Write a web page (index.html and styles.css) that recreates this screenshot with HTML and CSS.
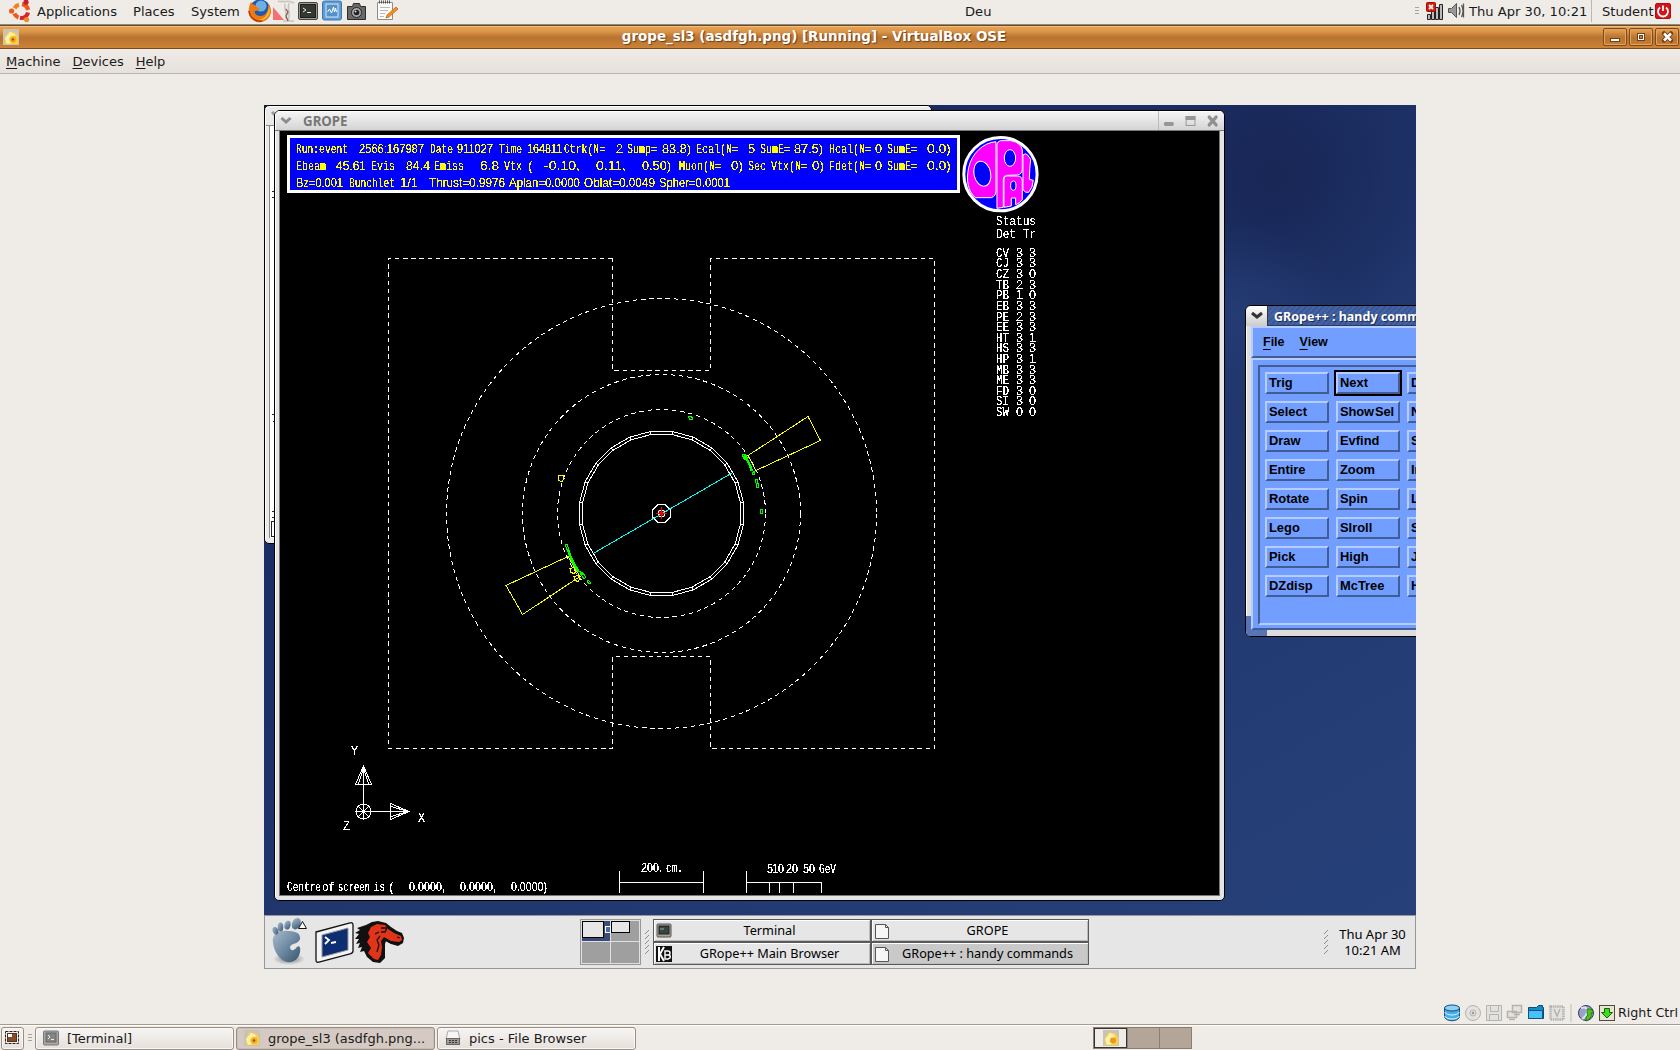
FILE: index.html
```html
<!DOCTYPE html>
<html lang="en">
<head>
<meta charset="utf-8">
<title>grope_sl3 (asdfgh.png) [Running] - VirtualBox OSE</title>
<link rel="stylesheet" href="styles.css">
</head>
<body>
<header class="panel">
  <svg class="ubuntu" viewBox="0 0 24 24"><g fill="none" stroke-width="4.2"><path d="M6.6 9.2A7 7 0 0 1 11 5.8" stroke="#f0831e"/><path d="M14 5.2A7.2 7.2 0 0 1 20 11" stroke="#ee5a1c"/><path d="M20 13.5A7.2 7.2 0 0 1 12 18.9" stroke="#d9252a"/><path d="M10.5 18.5A7 7 0 0 1 6.4 14.5" stroke="#ee5a1c"/></g><circle cx="3.6" cy="12" r="2.6" fill="#ee5a1c"/><circle cx="18" cy="3.2" r="2.6" fill="#c8202a"/><circle cx="18.6" cy="20.6" r="2.6" fill="#f08a26"/></svg>
  <span class="m-app">Applications</span><span class="m-places">Places</span><span class="m-system">System</span>
  <svg class="launch" viewBox="0 0 152 24">
    <circle cx="12" cy="11" r="10.500" fill="#2458a8"/><circle cx="13" cy="7" r="5.500" fill="#6cb0e8"/><path d="M3 3C0 9-1 17 5 21c7 5 17 1 18-8 0-4-1-6-3-8 1 5-1 12-8 12-4 0-6-3-5-5 2 0 4-1 5-3-2 0-4-1-5-3-1 0-3-1-4-3z" fill="#ee7a14"/><path d="M21 8c3 8-4 15-12 13 7 0 11-5 12-13z" fill="#f9c22b"/><path d="M1 12c1 8 8 11 13 10" fill="none" stroke="#b8340c" stroke-width="1.500"/>
    <path d="M25 8l11 13H25z" fill="#f77070"/><path d="M30 2c3 2 5-1 7 1 3-2 6 0 9 1M37 5c-1 5 2 8 1 15M41 4c-2 5 2 11-1 18M35 22h11" fill="none" stroke="#c9c4bd" stroke-width="1.600"/><path d="M38 10l2 3-2 4 2 5" fill="none" stroke="#8a5d50" stroke-width="1.300"/>
    <rect x="50.500" y="3.500" width="19" height="17" rx="1.500" fill="#999a94" stroke="#444"/><rect x="52.500" y="5.500" width="15" height="13" fill="#34382f" stroke="#1d1f1b"/><path d="M55 9l3 2-3 2M59 13.500h4" fill="none" stroke="#eee"/>
    <rect x="74.500" y="2" width="19" height="19" rx="2" fill="#5d9bd3" stroke="#3d78b4"/><rect x="78" y="5" width="12" height="13" fill="#5592ca" stroke="#d7e9f8"/><path d="M79.500 13l2-3 2 4 2-6 1 5 1-4 1 4" fill="none" stroke="#fff"/>
    <path d="M99.500 7.500h5l1-3h6l1 3h5v13h-18z" fill="#686a67" stroke="#2c2d2b"/><circle cx="108.500" cy="13.500" r="5" fill="#aaa" stroke="#222"/><circle cx="108.500" cy="13.500" r="2.800" fill="#222"/><circle cx="107.500" cy="12.500" r="1" fill="#ddd"/>
    <path d="M129.500 3.500h15v17h-15z" fill="#fafafa" stroke="#8d8d8a"/><path d="M131 3h12" stroke="#555" stroke-width="3" stroke-dasharray="1 1"/><path d="M132 8.500h10M132 11.500h8M132 14.500h5M132 17.500h4" stroke="#bbb"/><path d="M139 16l9-8 2 2-9 8-3 1z" fill="#f6931d" stroke="#b85a0c" stroke-width=".7"/>
  </svg>
  <span class="keyboard">Deu</span>
  <i class="grip"></i>
  <svg class="tray" viewBox="0 0 40 20"><g stroke="#222" fill="#bbb"><path d="M1.500 13.500h3v5h-3zM5.500 10.500h3v8h-3zM9.500 6.500h3v12h-3zM13.500 3.500h3v15h-3z"/></g><rect x=".5" y="1.500" width="9" height="9" rx="1" fill="#d91a10" stroke="#a80d05"/><path d="M3 4l4 4M7 4L3 8" stroke="#fff" stroke-width="1.800"/><path d="M22.500 7.500h3l5-5v14l-5-5h-3z" fill="#999" stroke="#555"/><path d="M33 6q2 4 0 8M35.500 4q3 6 0 12M37.500 2.500v14" fill="none" stroke="#555" stroke-width="1.300"/></svg>
  <span class="clock">Thu Apr 30, 10:21</span><i class="divider"></i><span class="user">Student</span>
  <svg class="power" viewBox="0 0 16 16"><rect x=".5" y=".5" width="15" height="15" rx="1.500" fill="#d8141b" stroke="#b30d12"/><path d="M5 4.500a5 5 0 1 0 6 0M8 2.500v5.500" fill="none" stroke="#fff" stroke-width="1.800"/></svg>
</header>

<div class="titlebar">
  <svg class="app-icon" viewBox="0 0 16 16"><rect width="16" height="16" fill="#c9c3b6"/><path d="M2 15V8l4-6 7 2 2 4v7z" fill="#f9d04c"/><path d="M2 9l5-6 5 2-3 9-5 1z" fill="#fff0a8"/><circle cx="10" cy="10.500" r="3.500" fill="#f5b21c"/><circle cx="10" cy="10.500" r="1.300" fill="#a64b10"/></svg>
  <span class="title">grope_sl3 (asdfgh.png) [Running] - VirtualBox OSE</span>
  <div class="winbtns"><b><svg viewBox="0 0 22 16"><rect x="6.500" y="9.500" width="9" height="3" fill="#fff" stroke="#714018"/></svg></b><b><svg viewBox="0 0 22 16"><rect x="7.500" y="4.500" width="7" height="7" fill="#fff" stroke="#714018"/><rect x="9.500" y="6.500" width="3" height="3" fill="#c98038" stroke="#714018"/></svg></b><b><svg viewBox="0 0 22 16"><path d="M8 4.500l7 7M15 4.500l-7 7" stroke="#714018" stroke-width="4.500" stroke-linecap="round"/><path d="M8 4.500l7 7M15 4.500l-7 7" stroke="#fff" stroke-width="2.500"/></svg></b></div>
</div>

<nav class="menubar"><span><u>M</u>achine</span><span><u>D</u>evices</span><span><u>H</u>elp</span></nav>

<main class="view">
  <div class="guest">
    <section class="back-window"><div class="back-title"><svg viewBox="0 0 10 8"><path d="M1 1l4 4 4-4" fill="none" stroke="#999" stroke-width="3"/></svg></div><div class="back-body"></div>
      <svg class="back-text" viewBox="0 0 10 370" shape-rendering="crispEdges"><path d="M2 16h4M4 16v6M2 22h4M2 239h4M3 246h4v-3M4 269h2M4 278h2M2 336h4M4 336v6M2 342h4M1.500 346.500h8v15h-8z" fill="none" stroke="#222"/></svg>
    </section>

    <section class="grope">
      <div class="gtitle"><svg class="chev" viewBox="0 0 12 9"><path d="M1.500 2L6 6l4.500-4" fill="none" stroke="#8c8c8c" stroke-width="3"/></svg><span>GROPE</span><svg class="gbtns" viewBox="0 0 66 20"><rect x="5" y="11" width="10" height="4" rx="1.500" fill="#969696"/><rect x="27.500" y="5.500" width="9" height="9" fill="none" stroke="#969696"/><rect x="27" y="5" width="10" height="4" fill="#969696"/><path d="M51 6l7 8M58 6l-7 8" stroke="#909090" stroke-width="3.300" stroke-linecap="round"/></svg></div>
      <svg class="canvas" viewBox="280 131 939 764">
        <defs><filter id="bitmap" x="0" y="0" width="1" height="1" color-interpolation-filters="sRGB"><feComponentTransfer><feFuncA type="discrete" tableValues="0 0 1 1 1"/></feComponentTransfer></filter></defs>
        <rect x="280" y="131" width="939" height="764" fill="#000"/>
        <rect x="288.500" y="136.500" width="670" height="55" fill="#00f" stroke="#fff" stroke-width="3"/>
        <g class="stroke-text yellow" id="banner"></g>
        <g class="stroke-text white" id="labels"></g>
        <g transform="translate(640 95) scale(.3333)" stroke="#fff" stroke-width="3" fill="#f0f" stroke-linejoin="round">
          <circle cx="1081.500" cy="237.500" r="110" fill="#00f" stroke-width="9"/>
          <path d="M1068 140c-38 3-72 34-82 78-8 40-2 70 20 90h48q14-4 14-22z"/><path d="M1071 340V148q2-9 10-11h32q30 6 34 28v57q0 15-14 18l-33 1q-10 1-10 12v84z"/><path d="M1092 337v-85q0-9 9-9h31q15 0 15 15v55q-6 12-20 16v-20h-13v24z"/><path d="M1149 180q8-7 14 0l9 13q-3 25-4 60l12 3q-1 22-14 36-10 3-17-8z"/>
          <ellipse cx="1027" cy="236" rx="25" ry="38" fill="#00f" transform="rotate(-12 1027 236)"/><ellipse cx="1110" cy="189" rx="17" ry="25" fill="#00f"/><ellipse cx="1120" cy="272" rx="8" ry="14" fill="#00f"/>
        </g>
        <g class="lines" fill="none" stroke="#fff" shape-rendering="crispEdges">
          <g stroke-dasharray="4.500 3.700"><path d="M612.500 258.500H388.500V748.500H612.500V656.500H710.500V748.500H934.500V258.500H710.500V370.500H612.500z"/><circle cx="661.500" cy="513.500" r="215"/><circle cx="661.500" cy="513.500" r="139"/><circle cx="661.500" cy="513.500" r="104"/></g>
          <g id="barrel"></g>
          <path d="M658 504.500h7l5.500 5.500v7l-5.500 5.500h-7l-5.500-5.500v-7z"/><path d="M660 510.500h3l1.500 1.500v3l-1.500 1.500h-3l-1.500-1.500v-3z"/>
          <path d="M363.500 765v54M355.500 811.500H410M363.500 766l8 18.500h-16zM363.500 768l5 16M363.500 768l-5 16M409 811.500l-18.500-8v16zM408 811.500l-17-5M408 811.500l-17 5M358 806l11 11M369 806l-11 11"/><circle cx="363.500" cy="811.500" r="7.500"/>
          <path d="M619.500 871v22M703.500 871v22M619.500 882.500h84M746.500 871v22M746.500 882.500h75v10.500M769.500 882.500v10.500M779.500 882.500v10.500M793.500 882.500v10.500"/>
          <path d="M594 553L732 473" stroke="#0ff"/>
          <path d="M748 455.500l60-39 12.500 24-64.500 30zM568 556.500L506 585.500l16.500 29L580 576.500zM559 475.500h4l1 3-2 3-4-1 0-3zM570 568.500l4-1 2 4-2 2-3-1zM574 576.500l4-1 2 3-2 3-3-1z" stroke="#ff0"/>
          <g stroke="#0f0"><path d="M688.500 416.500h2l2 1v2h-3zM742 455l3-1 3 4-3 2zM754 471l-2 3 2 1 1-3zM755 479h2l1 4h-2zM756 483h2v4h-2zM760.500 509.500h2v4h-2zM565.500 544h2l1 5h-2zM588 580l3 3-1 1-3-2zM580 571l3 4M580 573l4 6 2-2-4-5"/><path d="M744 456q5 5 8 15M568 549q3 12 11 23" stroke-width="2.500"/></g>
          <path d="M661.500 507v12M656 513.500h11M658 510l7 7M665 510l-7 7" stroke="#f00"/>
        </g>
      </svg>
    </section>

    <section class="handy">
      <div class="htitle"><b><svg viewBox="0 0 12 9"><path d="M1 2l5 4 5-4" fill="none" stroke="#333" stroke-width="3"/></svg></b><span>GRope++ : handy commands</span></div>
      <div class="hmenu"><span><u>F</u>ile</span><span><u>V</u>iew</span></div>
      <div class="hbody"><div class="hgrid">
        <b>Trig</b><b class="default">Next</b><b>D</b>
        <b>Select</b><b class="tight">Show Sel</b><b>N</b>
        <b>Draw</b><b>Evfind</b><b>S</b>
        <b>Entire</b><b>Zoom</b><b>In</b>
        <b>Rotate</b><b>Spin</b><b>L</b>
        <b>Lego</b><b>SIroll</b><b>S</b>
        <b>Pick</b><b>High</b><b>J</b>
        <b>DZdisp</b><b>McTree</b><b>H</b>
      </div></div>
    </section>

    <footer class="gpanel">
      <svg class="glaunch" viewBox="264 915 150 54">
        <defs><linearGradient id="foot" x2="1" y2="1"><stop stop-color="#a9bccb"/><stop offset=".5" stop-color="#6f8ba3"/><stop offset="1" stop-color="#38536c"/></linearGradient><radialGradient id="sh"><stop stop-color="#777"/><stop offset="1" stop-color="#777" stop-opacity="0"/></radialGradient></defs>
        <ellipse cx="289" cy="959" rx="16" ry="6" fill="url(#sh)"/>
        <g fill="url(#foot)"><path d="M273 943c-2-9 7-13 15-12 7 0 13 2 12 8-1 5-9 4-10 8 0 4 4 4 6 1 3-4 5-1 4 4-1 7-7 11-13 10-8-2-13-11-14-19z"/><ellipse cx="275.500" cy="931" rx="2.800" ry="4" transform="rotate(-20 275 931)"/><ellipse cx="280.500" cy="927" rx="2.800" ry="4.500"/><ellipse cx="287.500" cy="925" rx="3" ry="4.500" transform="rotate(15 287 925)"/><ellipse cx="296.500" cy="923.500" rx="4.200" ry="6" transform="rotate(25 296 923)"/></g>
        <path d="M298.500 928.500h8l-4-7z" fill="#fff" stroke="#111"/>
        <path d="M316 932l34-9q3-1 3 2v26q0 2-3 3l-31 8q-3 1-3-2z" fill="#f3f3f3" stroke="#111" stroke-width="1.300"/><path d="M322 935l26-7v22l-26 7z" fill="#0d2f72" stroke="#999"/><path d="M325 937l4 3-4 4M331 943l5-1" fill="none" stroke="#fff" stroke-width="1.800"/>
        <path d="M366 925l6-3 6-1 8 2 5 4 6 4 5 2 2 5-1 5-5 3-7-2-5-3-1 3 0 6 0 8-5 5-7-1-6-5-3-6-4 1 2-5-4 1 2-5-4 1 3-5-4 0 4-5-4-1 5-3-3-2z" fill="#111"/><path d="M371 927l6-3 8 1 3 4 6 4 7 3 1 4-3 2-8-1-7-4-3 4 1 6-1 8-3 5-4-1-6-6 3-5-4-6 3-5-2-4z" fill="#e23418"/><path d="M381 928l6 0-2 4-4 0M383 939l8 4 9 0M375 934l4-2M380 936l-3 4 2 5-2 7M397 937l3 1" fill="none" stroke="#111" stroke-width="1.300"/>
      </svg>
      <svg class="pager" viewBox="0 0 61 46" shape-rendering="crispEdges"><path fill="#e0e0e0" stroke="#979797" d="M.5.500h60v45H.5z"/><path fill="#9f9f9f" d="M2 2h28v20H2zM31 2h28v20H31zM2 23h28v21H2zM31 23h28v21H31z"/><path fill="#394b76" d="M2 2h28v20H2z"/><path fill="#e6e6e6" stroke="#000" d="M2.500 2.500h21v16h-21zM31.500 2.500h18v11h-18z"/><path fill="#476bb0" stroke="#fff" d="M25.500 7.500h5v6h-5z"/></svg>
      <svg class="ggrip" viewBox="0 0 5 26"><path d="M0 5l4-4M0 10l4-4M0 15l4-4M0 20l4-4M0 25l4-4" stroke="#8d8d8d"/></svg>
      <div class="tasks">
        <div><svg viewBox="0 0 16 16"><rect x="1" y="1" width="14" height="13" rx="1" fill="#a5a396" stroke="#555"/><rect x="3" y="3" width="10" height="8" fill="#35453f" stroke="#222"/><path d="M4 6h4" stroke="#9aa"/></svg><span>Terminal</span></div>
        <div><svg viewBox="0 0 16 16"><path d="M1.500 1.500h10l3 3v11h-13z" fill="#f7f7f7" stroke="#555"/><path d="M11.500 1.500v3h3" fill="none" stroke="#555"/></svg><span>GROPE</span></div>
        <div><svg viewBox="0 0 16 16"><rect width="16" height="16" fill="#111"/><path d="M3 1v14M8 1L4 8l4 7" fill="none" stroke="#fff" stroke-width="2"/><path d="M9 5h3q2 0 2 2t-2 2H9zm0 4h4q2 1 1 3l-2 1H9z" fill="none" stroke="#fff" stroke-width="1.400"/></svg><span>GRope++ Main Browser</span></div>
        <div class="active"><svg viewBox="0 0 16 16"><path d="M1.500 1.500h10l3 3v11h-13z" fill="#f7f7f7" stroke="#555"/><path d="M11.500 1.500v3h3" fill="none" stroke="#555"/></svg><span>GRope++ : handy commands</span></div>
      </div>
      <svg class="ggrip right" viewBox="0 0 5 26"><path d="M0 5l4-4M0 10l4-4M0 15l4-4M0 20l4-4M0 25l4-4" stroke="#8d8d8d"/></svg>
      <div class="gclock">Thu Apr 30<br>10:21 AM</div>
    </footer>
  </div>
</main>

<div class="status">
  <svg viewBox="1440 1000 178 24">
    <g stroke="#174f7b"><path d="M1444.500 1008v9c2 5 13 5 15 0v-9z" fill="#45aee8"/><path d="M1444.500 1012c2 4 13 4 15 0M1444.500 1016c2 4 13 4 15 0" fill="none" stroke="#e8f7ff"/><ellipse cx="1452" cy="1008" rx="7.500" ry="3" fill="#8ad0f7"/></g>
    <g fill="#e4e2de" stroke="#b5b3af"><circle cx="1473" cy="1013" r="7.500"/><circle cx="1473" cy="1013" r="3"/><path d="M1486.500 1005.500h15v15h-15z"/><path d="M1490.500 1005.500h8v6h-8zM1489.500 1014.500h9v6h-9z"/><path d="M1512.500 1005.500h9v7h-9zM1507.500 1011.500h9v6h-9zM1509 1019.500h6M1514 1014.500h6" stroke-width="1.500"/><rect x="1550.500" y="1006.500" width="13" height="13" stroke-width="2.500" stroke-dasharray="1.500 .7"/><path d="M1554 1009l3 7 3-7" fill="none" stroke-width="1.500"/></g><circle cx="1473" cy="1013" r="1.300" fill="#999"/>
    <path d="M1528.500 1007.500h8l2-2h4v2h1v11h-15z" fill="#1689c8" stroke="#0b4b74"/><path d="M1528.500 1010.500h14v8h-14z" fill="#46c2f8" stroke="#0b557f"/>
    <path d="M1571 1004v18" stroke="#c1bcb4"/><circle cx="1586" cy="1013" r="7.500" fill="#9aa2cc" stroke="#343856"/><path d="M1581 1008q6-2 6 3t-5 8" stroke="#dfe2ff" stroke-width="2" fill="none"/><path d="M1587 1009h4l3 4h-3c1 4-1 6-5 8v-4c2-1 2-3 1-4z" fill="#4fc41a" stroke="#176a00" stroke-width=".8"/>
    <rect x="1599.500" y="1005.500" width="15" height="15" fill="#e7e4d6" stroke="#504c3d"/><path d="M1604.500 1008.500h5v4h3l-5.500 5.500-5.500-5.500h3z" fill="#3fdb1e" stroke="#0b6a00"/>
  </svg><span>Right Ctrl</span>
</div>

<footer class="taskbar">
  <b class="show"><svg viewBox="0 0 16 16"><rect x="1.500" y="1.500" width="13" height="12" fill="#eee" stroke="#222" stroke-dasharray="3 1"/><rect x="3.500" y="3.500" width="9" height="8" fill="#874b2b" stroke="#55301b"/><path d="M4 4h4v3H4z" fill="#fff"/></svg></b><i class="grip"></i>
  <b><svg viewBox="0 0 16 16"><rect x=".5" y="1" width="15" height="14" rx="1" fill="#a9aaa6" stroke="#777"/><rect x="3" y="3" width="10" height="9" fill="#848683" stroke="#666"/><path d="M5 5l2 2-2 2M8 9.500h3" fill="none" stroke="#eee"/></svg>[Terminal]</b>
  <b class="on"><svg viewBox="0 0 16 16"><rect width="16" height="16" fill="#c9c3b6"/><path d="M2 15V8l4-6 7 2 2 4v7z" fill="#f9d04c"/><path d="M2 9l5-6 5 2-3 9-5 1z" fill="#fff0a8"/><circle cx="10" cy="10.500" r="3.500" fill="#f5b21c"/><circle cx="10" cy="10.500" r="1.300" fill="#a64b10"/></svg>grope_sl3 (asdfgh.png...</b>
  <b><svg viewBox="0 0 16 16"><path d="M3 1h10l2 8H1z" fill="#f6f6f4" stroke="#aaa"/><rect x="1.500" y="8.500" width="13" height="6" fill="#999" stroke="#666"/><path d="M4 10.500h8M4 12.500h8" stroke="#333" stroke-dasharray="2 1"/></svg>pics - File Browser</b>
  <div class="spaces"><i><svg viewBox="0 0 16 16"><rect width="16" height="16" fill="#c9c3b6"/><path d="M2 15V8l4-6 7 2 2 4v7z" fill="#f9d04c"/><path d="M2 9l5-6 5 2-3 9-5 1z" fill="#fff0a8"/><circle cx="10" cy="10.500" r="3" fill="#e89a18"/></svg></i><i></i><i></i></div>
</footer>
<script src="display.js"></script>
</body>
</html>
```
FILE: display.js
```js
(function () {
  var ns = 'http://www.w3.org/2000/svg';
  function add(parent, name, attrs, text) {
    var el = document.createElementNS(ns, name);
    for (var key in attrs) el.setAttribute(key, attrs[key]);
    if (text) el.textContent = text;
    document.getElementById(parent).appendChild(el);
  }

  // A word of the stroke font, fitted to its plotted width
  function word(parent, text, x, y, width) {
    add(parent, 'text', {
      x: x, y: y, textLength: width, lengthAdjust: 'spacingAndGlyphs',
      'class': /\d/.test(text) ? 'digits' : 'letters'
    }, text);
  }
  function line(parent, y, words) {
    words.forEach(function (w) { word(parent, w[0], w[1], y, w[2]); });
  }

  // 24-module barrel: a pair of concentric polygons joined at the module edges
  var cx = 661.5, cy = 513.5, d = '', i;
  function point(apothem, i) {
    var r = apothem / Math.cos(Math.PI / 24), a = (i + 0.5) * Math.PI / 12;
    return (cx + r * Math.cos(a)).toFixed(2) + ' ' + (cy + r * Math.sin(a)).toFixed(2);
  }
  [82, 79].forEach(function (apothem) {
    for (i = 0; i < 24; i++) d += (i ? 'L' : 'M') + point(apothem, i);
    d += 'z';
  });
  for (i = 0; i < 24; i++) d += 'M' + point(82, i) + 'L' + point(79, i);
  add('barrel', 'path', { d: d });

  // Event summary
  line('banner', 153, [['Run:event', 296, 52], ['2566:167987', 359, 65], ['Date', 430, 23], ['911027', 457, 36], ['Time', 499, 23], ['164811', 527, 35], ['Ctrk(N=', 564, 41], ['2', 616, 7], ['Sump=', 627, 30], ['83.8)', 662, 29], ['Ecal(N=', 696, 42], ['5', 748, 7], ['SumE=', 760, 30], ['87.5)', 794, 29], ['Hcal(N=', 829, 42], ['0', 875, 7], ['SumE=', 887, 30], ['0.0)', 927, 24]]);
  line('banner', 170, [['Ebeam', 296, 30], ['45.61', 336, 30], ['Evis', 371, 24], ['84.4', 406, 24], ['Emiss', 434, 30], ['6.8', 480, 19], ['Vtx', 504, 18], ['(', 527, 7], ['-0.10,', 544, 36], ['0.11,', 596, 30], ['0.50)', 642, 29], ['Muon(N=', 679, 42], ['0)', 731, 12], ['Sec', 748, 18], ['Vtx(N=', 771, 36], ['0)', 812, 12], ['Fdet(N=', 829, 42], ['0', 875, 7], ['SumE=', 887, 30], ['0.0)', 927, 24]]);
  line('banner', 187, [['Bz=0.001', 296, 47], ['Bunchlet', 349, 46], ['1/1', 400, 18], ['Thrust=0.9976', 429, 76], ['Aplan=0.0000', 509, 71], ['Oblat=0.0049', 584, 71], ['Spher=0.0001', 659, 71]]);

  // Detector and trigger status words, one row per subdetector
  line('labels', 225, [['Status', 996, 40]]);
  line('labels', 238, [['Det', 996, 20], ['Tr', 1023, 13]]);
  ['CV 3 3', 'CJ 3 3', 'CZ 3 0', 'TB 2 3', 'PB 1 0', 'EB 3 3', 'PE 2 3', 'EE 3 3',
   'HT 3 1', 'HS 3 3', 'HP 3 1', 'MB 3 3', 'ME 3 3', 'FD 3 0', 'SI 3 0', 'SW 0 0'].forEach(function (row, n) {
    var part = row.split(' ');
    line('labels', Math.round(256.8 + n * 10.62), [[part[0], 996, 13], [part[1], 1016, 7], [part[2], 1029, 7]]);
  });

  // Axes, scales and screen centre
  word('labels', 'Y', 351, 755, 7);
  word('labels', 'X', 418, 822, 7);
  word('labels', 'Z', 343, 830, 7);
  line('labels', 872, [['200.', 641, 21], ['cm.', 666, 17]]);
  line('labels', 873, [['5', 767, 6], ['10', 772, 12], ['20', 786, 12], ['50', 803, 12], ['GeV', 819, 17]]);
  line('labels', 891, [['Centre', 287, 34], ['of', 322, 13], ['screen', 338, 32], ['is', 374, 11], ['(', 388, 7], ['0.0000,', 409, 36], ['0.0000,', 460, 36], ['0.0000)', 511, 36]]);
})();
```
FILE: styles.css
```css
* { box-sizing: border-box; }
body { margin: 0; width: 1680px; height: 1050px; overflow: hidden; display: flex; flex-direction: column; background: #efebe7; color: #1a1a1a; font: 13.1px "DejaVu Sans", sans-serif; white-space: nowrap; }
svg { display: block; flex: none; }
i { font-style: normal; }
.grip { width: 4px; height: 8px; flex: none; background: repeating-linear-gradient(#aaa29a 0 1px, transparent 1px 3px); }

.panel { height: 25px; flex: none; display: flex; align-items: center; border-bottom: 1px solid #8f8a7c; padding-left: 8px; padding-bottom: 2px; }
.panel span { flex: none; }
.ubuntu { width: 24px; height: 24px; }
.m-app { width: 96px; margin-left: 5px; }
.m-places { width: 58px; }
.m-system { width: 57px; }
.launch { width: 152px; height: 24px; }
.keyboard { margin-left: 565px; width: 450px; }
.tray { width: 40px; height: 20px; margin-left: 7px; }
.clock { margin-left: 3px; width: 122px; }
.divider { width: 1px; height: 22px; background: #bbb6b0; margin-right: 10px; }
.user { width: 53px; }
.power { width: 16px; height: 16px; }

.titlebar { height: 24px; flex: none; display: flex; align-items: center; background: linear-gradient(#e8a558, #dd9547 25%, #bf7a35 45%, #b8732f 55%, #cd8337); border-top: 1px solid #6b4a26; border-bottom: 1px solid #7d4c1e; padding: 0 1px 0 3px; box-shadow: inset 0 1px #f4bd7d; }
.app-icon { width: 16px; height: 16px; }
.title { flex: 1; text-align: center; padding-left: 6px; color: #fff; font-weight: bold; font-size: 13.45px; text-shadow: 1px 1px 1px #63401d; line-height: 20px; }
.winbtns { display: flex; gap: 2px; }
.winbtns b { width: 24px; height: 18px; border: 1px solid #80491c; border-radius: 2px; box-shadow: inset 0 0 0 1px #e0a464; }
.winbtns svg { width: 22px; height: 16px; }

.menubar { height: 25px; flex: none; display: flex; gap: 12px; align-items: center; padding-left: 6px; background: linear-gradient(#efebe7, #e6e1dc); border-bottom: 1px solid #bcb6af; font-size: 13px; }
u { text-underline-offset: 2px; }

.view { height: 926px; flex: none; padding: 31px 264px 0; }
.guest { position: relative; width: 1152px; height: 864px; overflow: hidden; font-family: "Noto Sans", sans-serif; color: #000; background: radial-gradient(ellipse 130px 90px at 960px 210px, #243c74, transparent), radial-gradient(ellipse 170px 170px at 1010px 70px, #182655, transparent), linear-gradient(150deg, #0f1d48 0%, #1a2b60 25%, #20366d 55%, #243d75 80%, #27417a 100%); }

.back-window { position: absolute; left: 0; top: 0; width: 668px; height: 439px; background: #e9e9e9; border: 1px solid #000; border-radius: 5px 5px 0 5px; padding: 0 0 5px 4px; box-shadow: inset 1px 1px #fff; }
.back-title { height: 20px; border-bottom: 1px solid #888; margin-left: -3px; }
.back-title svg { width: 10px; height: 8px; margin-left: 5px; transform: translateY(5px); }
.back-body { height: 412px; background: #fff; border-left: 1px solid #888; }
.back-text { position: absolute; left: 5px; top: 69px; width: 10px; height: 370px; }

.grope { position: absolute; left: 10px; top: 5px; width: 951px; height: 791px; background: #e4e4e4; border: 1px solid #000; border-radius: 6px 6px 5px 5px; box-shadow: inset 1px 1px #fff; overflow: hidden; }
.gtitle { height: 20px; display: flex; align-items: center; background: linear-gradient(#f6f6f6, #d4d4d4); border-bottom: 1px solid #777; color: #777; font-weight: bold; font-size: 13.3px; box-shadow: inset 1px 1px #fff; }
.gtitle span { flex: 1; padding-top: 1px; }
.chev { width: 12px; height: 9px; margin: 0 11px 0 5px; }
.gbtns { width: 66px; height: 20px; border-left: 1px solid #bbb; }
.canvas { width: 939px; height: 764px; margin-left: 5px; outline: 1px solid #777; }
.stroke-text { filter: url(#bitmap); }
.digits { font: 12.5px "Liberation Sans", sans-serif; }
.letters { font: 13.5px "Liberation Mono", monospace; }
.yellow { fill: #ff0; }
.white { fill: #fff; }

.handy { position: absolute; left: 981px; top: 200px; width: 290px; height: 332px; background: #dcdcdc; border: 1px solid #000; border-radius: 6px; overflow: hidden; padding: 0 4px 7px 5px; box-shadow: inset 1px 1px #fff; }
.handy::after { content: ""; position: absolute; left: 0; bottom: 0; width: 21px; height: 20px; background: #5775b4; z-index: 0; }
.handy > * { position: relative; z-index: 1; }
.htitle { height: 20px; margin: 0 -4px 0 -5px; display: flex; align-items: center; border-bottom: 1px solid #26396a; background: repeating-linear-gradient(135deg, #4562a2 0 2px, #3b5896 2px 4px); color: #fff; font-weight: bold; font-size: 12.5px; text-shadow: 1px 1px #1d2b55; }
.htitle span { padding-top: 2px; }
.htitle b { width: 22px; height: 20px; background: linear-gradient(#fff, #ccc); border-right: 1px solid #333; display: grid; place-items: center; margin-right: 6px; }
.htitle svg { width: 12px; height: 9px; }
.hmenu, .hbody { background: #729fff; border: 2px solid; border-color: #b8cdff #425c94 #425c94 #b8cdff; font: bold 12.5px "Liberation Sans", sans-serif; }
.hmenu { height: 32px; display: flex; align-items: center; gap: 15px; padding: 0 0 1px 10px; }
.hmenu u { text-underline-offset: 3px; }
.hbody { height: 272px; padding: 5px; }
.hgrid { height: 260px; border: 2px solid; border-color: #425c94 #b8cdff #b8cdff #425c94; padding: 5px 0 0 5px; display: grid; grid-template-columns: repeat(3, 64px); grid-auto-rows: 22px; gap: 7px; font-size: 12.9px; }
.hgrid b { border: 2px solid; border-color: #b8cdff #425c94 #425c94 #b8cdff; line-height: 18px; padding-left: 2px; }
.hgrid .default { outline: 2px solid #000; }
.hgrid .tight { word-spacing: -2.5px; letter-spacing: -.1px; }

.gpanel { position: absolute; left: 0; top: 810px; width: 1152px; height: 54px; background: #e6e6e6; border: 1px solid #979797; display: flex; align-items: center; }
.glaunch { width: 150px; height: 54px; margin: 0 166px 0 -1px; }
.pager { width: 61px; height: 46px; }
.ggrip { width: 5px; height: 26px; margin: 0 0 0 4px; }
.tasks { width: 436px; height: 46px; margin-left: 3px; display: grid; grid-template-columns: 218px 218px; grid-template-rows: 23px 23px; font-size: 12.7px; }
.tasks div { display: flex; align-items: center; border: 1px solid #5a5a5a; box-shadow: inset 1px 1px #fff, inset -1px -1px #bbb; padding: 0 3px 0 2px; line-height: 17px; }
.tasks svg { width: 16px; height: 16px; }
.tasks span { flex: 1; text-align: center; padding-bottom: 1px; }
.tasks .active { background: #c9c9c9; }
.ggrip.right { margin-left: 235px; }
.gclock { flex: 1; text-align: center; line-height: 16px; font-size: 13px; padding: 0 6px 0 7px; }

.status { height: 24px; flex: none; display: flex; align-items: center; justify-content: flex-end; padding-right: 2px; font-size: 12.7px; }
.status svg { width: 178px; height: 24px; }

.taskbar { height: 26px; flex: none; display: flex; align-items: center; border-top: 1px solid #a8998b; box-shadow: inset 0 1px #fff; padding: 1px 0 0 1px; font-size: 13px; }
.taskbar b { width: 199px; height: 23px; margin-right: 2px; padding-left: 7px; display: flex; align-items: center; gap: 8px; font-weight: normal; border: 1px solid #9a8f85; border-radius: 3px; background: linear-gradient(#f6f4f2, #e6e0db); box-shadow: inset 0 0 0 1px #faf8f6; }
.taskbar svg { width: 16px; height: 16px; }
.taskbar .show { width: 23px; padding-left: 2px; margin-right: 4px; }
.taskbar .grip { margin-right: 3px; }
.taskbar .on { background: #d5cac3; box-shadow: inset 0 0 0 1px #cabeb5; }
.spaces { margin-left: 455px; width: 99px; height: 22px; border: 1px solid #8a7f75; display: flex; gap: 1px; background: #8a7f75; }
.spaces i { flex: 1; background: #b3a698; display: grid; place-items: center; }
.spaces i:first-child { background: #efebe7; border: 1px solid #333; }
```
